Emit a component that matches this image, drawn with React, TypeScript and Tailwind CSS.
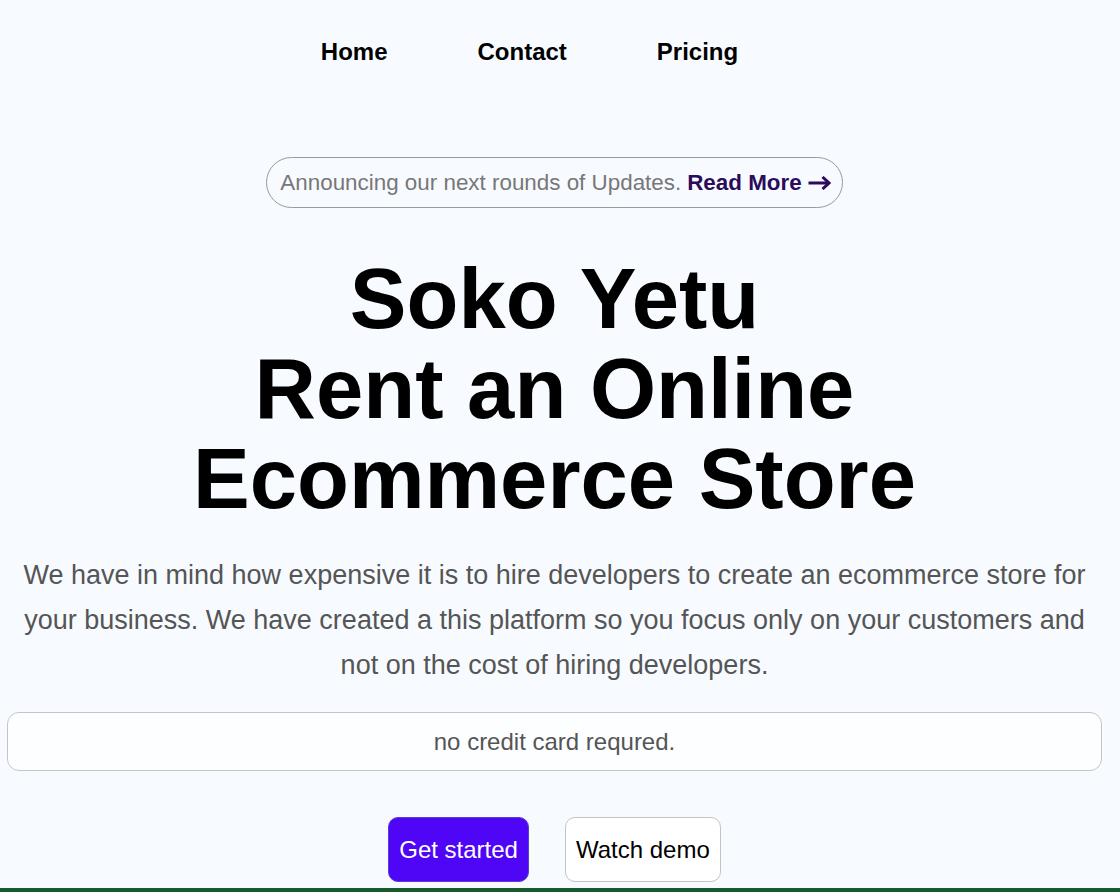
import React from "react";

const font = { fontFamily: '"Liberation Sans", Arial, sans-serif' };

const NavBar: React.FC = () => {
  const links = ["Home", "Contact", "Pricing"];
  return (
    <nav className="flex justify-center gap-[90px] pt-[38px] pr-[50px]">
      {links.map((link) => (
        <a key={link} href="#" className="text-[24px] leading-7 font-bold text-black">
          {link}
        </a>
      ))}
    </nav>
  );
};

const ArrowRight: React.FC = () => (
  <svg width="23" height="14" viewBox="0 0 23 14" fill="none" className="ml-[6px]">
    <path d="M0.5 7H21" stroke="#2b0b5a" strokeWidth="3" />
    <path d="M14.5 1L21 7L14.5 13" stroke="#2b0b5a" strokeWidth="3" />
  </svg>
);

const Announcement: React.FC = () => (
  <div className="flex justify-center">
    <div className="flex items-center rounded-full border border-[#9a9a9a] pl-[13px] pr-[11px] py-3 text-[22.4px] leading-[25px]">
      <span className="text-[#777777]">Announcing our next rounds of Updates.</span>
      <span className="ml-[6px] font-bold text-[#2b0b5a]">Read More</span>
      <ArrowRight />
    </div>
  </div>
);

export default function App() {
  return (
    <div className="min-h-screen bg-[#f7fbff]" style={font}>
      <div className="w-[1109px]">
        <NavBar />
        <div className="mt-[91px]">
          <Announcement />
        </div>
        <h1 className="mt-[46px] text-center text-[85px] leading-[90px] font-bold text-black">
          Soko Yetu
          <br />
          Rent an Online
          <br />
          Ecommerce Store
        </h1>
        <p className="mt-[29px] px-4 text-center text-[27px] leading-[45px] text-[#555555]">
          We have in mind how expensive it is to hire developers to create an ecommerce store for
          your business. We have created a this platform so you focus only on your customers and
          not on the cost of hiring developers.
        </p>
        <div className="mx-[7px] mt-[24px] flex h-[59px] items-center justify-center rounded-xl border border-[#c4c4c4] bg-[#fdfeff] text-[24px] text-[#555555]">
          no credit card requred.
        </div>
        <div className="mt-[46px] flex justify-center gap-9">
          <button className="h-[65px] rounded-[10px] border border-[#5b3bd6] bg-[#4f06f6] px-[10px] text-[24px] text-white">
            Get started
          </button>
          <button className="h-[65px] rounded-[10px] border border-[#c4c4c4] bg-white px-[10px] text-[24px] text-black">
            Watch demo
          </button>
        </div>
      </div>
      <footer className="mt-[6px] h-[300px] bg-[#165a2e]" />
    </div>
  );
}
